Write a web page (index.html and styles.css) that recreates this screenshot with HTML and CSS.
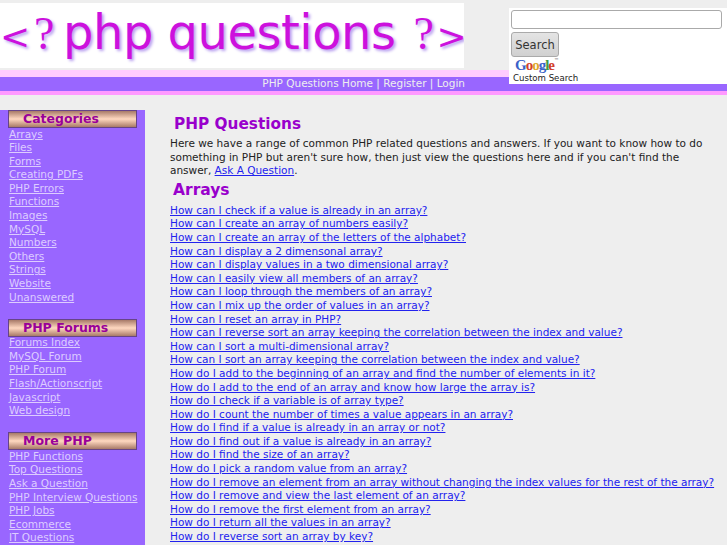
FILE: index.html
```html
<!DOCTYPE html>
<html lang="en">
<head>
<meta charset="utf-8">
<title>PHP Questions</title>
<link rel="stylesheet" href="styles.css">
</head>
<body>
<header class="header">
  <div class="logo"><span class="logo-mark">&lt;</span><span class="logo-q">?</span><span class="logo-word">php questions</span><span class="logo-q logo-q-end">?</span><span class="logo-mark">&gt;</span></div>
  <form class="search">
    <input class="search-input" type="text" aria-label="Search">
    <button class="search-btn" type="button">Search</button>
    <div class="brand"><span class="g-blue">G</span><span class="g-red">o</span><span class="g-yellow">o</span><span class="g-blue">g</span><span class="g-green">l</span><span class="g-red">e</span><sup class="tm">™</sup></div>
    <div class="custom">Custom Search</div>
  </form>
</header>
<nav class="topbar">PHP Questions Home | Register | Login</nav>
<div class="page">
  <aside class="sidebar">
    <h3 class="side-title">Categories</h3>
    <ul class="side-list">
      <li><a href="#">Arrays</a></li><li><a href="#">Files</a></li><li><a href="#">Forms</a></li><li><a href="#">Creating PDFs</a></li><li><a href="#">PHP Errors</a></li><li><a href="#">Functions</a></li><li><a href="#">Images</a></li><li><a href="#">MySQL</a></li><li><a href="#">Numbers</a></li><li><a href="#">Others</a></li><li><a href="#">Strings</a></li><li><a href="#">Website</a></li><li><a href="#">Unanswered</a></li>
    </ul>
    <h3 class="side-title">PHP Forums</h3>
    <ul class="side-list">
      <li><a href="#">Forums Index</a></li><li><a href="#">MySQL Forum</a></li><li><a href="#">PHP Forum</a></li><li><a href="#">Flash/Actionscript</a></li><li><a href="#">Javascript</a></li><li><a href="#">Web design</a></li>
    </ul>
    <h3 class="side-title">More PHP</h3>
    <ul class="side-list">
      <li><a href="#">PHP Functions</a></li><li><a href="#">Top Questions</a></li><li><a href="#">Ask a Question</a></li><li><a href="#">PHP Interview Questions</a></li><li><a href="#">PHP Jobs</a></li><li><a href="#">Ecommerce</a></li><li><a href="#">IT Questions</a></li>
    </ul>
  </aside>
  <main class="main">
    <h1 class="title">PHP Questions</h1>
    <p class="intro">Here we have a range of common PHP related questions and answers. If you want to know how to do something in PHP but aren't sure how, then just view the questions here and if you can't find the answer, <a href="#">Ask A Question</a>.</p>
    <h2 class="section">Arrays</h2>
    <ul class="questions">
      <li><a href="#">How can I check if a value is already in an array?</a></li>
      <li><a href="#">How can I create an array of numbers easily?</a></li>
      <li><a href="#">How can I create an array of the letters of the alphabet?</a></li>
      <li><a href="#">How can I display a 2 dimensonal array?</a></li>
      <li><a href="#">How can I display values in a two dimensional array?</a></li>
      <li><a href="#">How can I easily view all members of an array?</a></li>
      <li><a href="#">How can I loop through the members of an array?</a></li>
      <li><a href="#">How can I mix up the order of values in an array?</a></li>
      <li><a href="#">How can I reset an array in PHP?</a></li>
      <li><a href="#">How can I reverse sort an array keeping the correlation between the index and value?</a></li>
      <li><a href="#">How can I sort a multi-dimensional array?</a></li>
      <li><a href="#">How can I sort an array keeping the correlation between the index and value?</a></li>
      <li><a href="#">How do I add to the beginning of an array and find the number of elements in it?</a></li>
      <li><a href="#">How do I add to the end of an array and know how large the array is?</a></li>
      <li><a href="#">How do I check if a variable is of array type?</a></li>
      <li><a href="#">How do I count the number of times a value appears in an array?</a></li>
      <li><a href="#">How do I find if a value is already in an array or not?</a></li>
      <li><a href="#">How do I find out if a value is already in an array?</a></li>
      <li><a href="#">How do I find the size of an array?</a></li>
      <li><a href="#">How do I pick a random value from an array?</a></li>
      <li><a href="#">How do I remove an element from an array without changing the index values for the rest of the array?</a></li>
      <li><a href="#">How do I remove and view the last element of an array?</a></li>
      <li><a href="#">How do I remove the first element from an array?</a></li>
      <li><a href="#">How do I return all the values in an array?</a></li>
      <li><a href="#">How do I reverse sort an array by key?</a></li>
    </ul>
  </main>
</div>
</body>
</html>
```
FILE: styles.css
```css
html, body { margin: 0; padding: 0; }
body {
  height: 545px;
  overflow: hidden;
  position: relative;
  background: #eeeeee;
  color: #222;
  font: 10.5px/13.6px "DejaVu Sans", sans-serif;
}
a { color: #2222ee; }
.header { height: 70px; padding-top: 3px; box-sizing: border-box; }
.logo {
  width: 464px;
  height: 65px;
  background: #fff;
  overflow: hidden;
  white-space: nowrap;
  display: flex;
  align-items: baseline;
  color: #cc11dd;
  text-shadow: 2px 2px 3px #b9a0f0;
  line-height: 58px;
}
.logo-mark { font-size: 36px; width: 32px; letter-spacing: -1px; flex: none; }
.logo-q { font: 46px/58px "Liberation Serif", serif; width: 28px; padding-left: 2px; box-sizing: border-box; flex: none; }
.logo-word { font-size: 48px; letter-spacing: -0.5px; margin: 0 18px 0 3px; flex: none; }
.logo-q-end { width: 23px; padding-left: 0; }
.search {
  position: absolute;
  left: 509px;
  top: 8px;
  width: 218px;
  height: 76px;
  background: #fff;
  padding: 2px 0 0 2px;
  box-sizing: border-box;
  margin: 0;
}
.search-input {
  display: block;
  box-sizing: border-box;
  width: 211px;
  height: 19px;
  padding: 0 3px;
  border: 1px solid #aaa;
  border-radius: 3px;
  background: #fff;
  margin: 0 0 3px;
}
.search-btn {
  display: block;
  box-sizing: border-box;
  width: 48px;
  height: 25px;
  padding: 0;
  border: 1px solid #aaa;
  border-radius: 3px;
  background: linear-gradient(#e4e4e4, #d0d0d0);
  color: #333;
  font: 11.5px "DejaVu Sans", sans-serif;
}
.brand {
  font: bold 15px/15px "Liberation Serif", serif;
  margin: 1px 0 0 4px;
  height: 14px;
  letter-spacing: -1px;
}
.tm { font: 5px/5px "DejaVu Sans", sans-serif; color: #555; vertical-align: top; letter-spacing: 0; }
.g-blue { color: #3a62c8; }
.g-red { color: #d2402c; }
.g-yellow { color: #e0a92a; }
.g-green { color: #3f9a45; }
.custom { font-size: 8.6px; line-height: 9px; color: #222; margin: 2px 0 0 2px; }
.topbar {
  height: 14px;
  border-top: 7px solid #ffccff;
  border-bottom: 4px solid #ff99ff;
  background: #9966ff;
  color: #eee;
  text-align: right;
  padding-right: 262px;
  line-height: 13px;
}
.page { display: flex; margin-top: 15px; align-items: stretch; }
.sidebar {
  width: 145px;
  flex: none;
  box-sizing: border-box;
  background: #9966ff;
  padding-left: 8px;
  height: 435px;
  overflow: hidden;
}
.side-title {
  box-sizing: border-box;
  width: 129px;
  height: 18px;
  margin: 0;
  padding-left: 14px;
  border: 1px solid #664488;
  background: linear-gradient(#a87a68, #ffd8c0 50%, #a87a68);
  color: #990099;
  font-size: 12.5px;
  line-height: 15px;
  font-weight: bold;
}
.side-list { list-style: none; margin: -0.5px 0 14.5px; padding: 0 0 0 1px; }
.side-list li { height: 13.6px; white-space: nowrap; }
.side-list a { color: #ddccff; }
.main { flex: 1; min-width: 0; padding: 0 8px 0 25px; }
.title {
  margin: 4px 0 0 4px;
  font-size: 15.3px;
  line-height: 20px;
  color: #9900cc;
}
.intro { margin: 3px 0 0; }
.section {
  margin: 2px 0 0 3px;
  font-size: 15.5px;
  line-height: 20px;
  color: #9900cc;
}
.questions { list-style: none; margin: 4px 0 0; padding: 0; }
.questions li { height: 13.6px; white-space: nowrap; }
```
